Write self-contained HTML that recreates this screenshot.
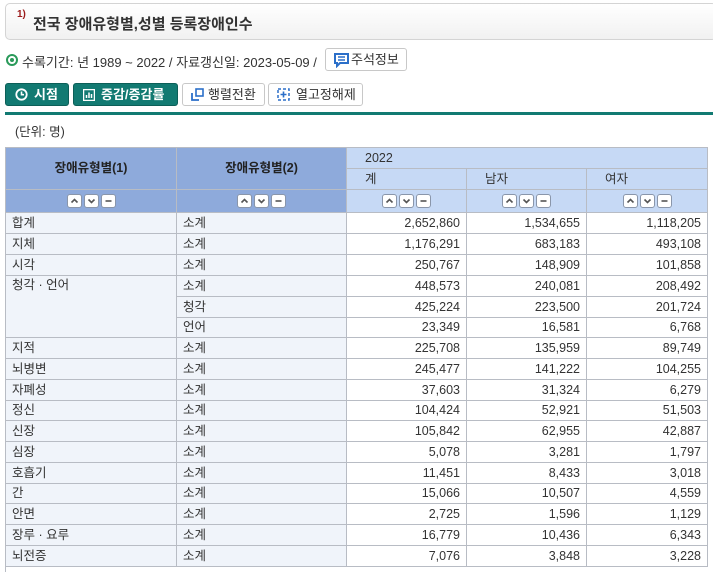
<!DOCTYPE html>
<html><head><meta charset="utf-8"><style>
*{margin:0;padding:0;box-sizing:border-box}
body{width:713px;height:572px;overflow:hidden;background:#fff;font-family:"Liberation Sans","Noto Sans CJK KR",sans-serif;color:#222;position:relative;font-size:13px}
.a{position:absolute}
.title{left:5px;top:3px;width:712px;height:37px;border:1px solid #d4d4d4;border-radius:5px;background:linear-gradient(#fff,#f1f1f1);}
.title span{position:absolute;left:27px;top:9px;font-size:15px;font-weight:bold;color:#333}
.title sup{position:absolute;left:11px;top:5px;font-size:10px;font-weight:bold;color:#9b1b1b}
.btn{position:absolute;top:83px;height:23px;border-radius:3px;font-size:13px;line-height:21px;white-space:nowrap}
.g{background:#127a72;color:#fff;font-weight:bold;border:1px solid #0c5f58}
.w{background:#fff;border:1px solid #c8c8c8;color:#333}
table{position:absolute;left:5px;top:147px;border-collapse:collapse;table-layout:fixed;font-size:12.5px}
td{border:1px solid #b8bcc4;height:21px;padding:0 6px;color:#333;line-height:19px;overflow:hidden;white-space:nowrap}
tr.s td{height:20px}
td.l{background:#f0f4fa}
td.n{text-align:right}
.h1{background:#8eaadb;font-weight:bold;text-align:center;color:#222}
.h2{background:#c6d9f5}
.ic{display:inline-block;width:15px;height:14px;border:1px solid #8a96aa;border-radius:3px;background:#fff;margin:0 1px;vertical-align:middle}
.ic svg{display:block}
</style></head><body>
<div class="a title"><sup>1)</sup><span>전국 장애유형별,성별 등록장애인수</span></div>
<div class="a" style="left:6px;top:54px;width:12px;height:12px;border-radius:50%;border:2px solid #2a9a5a"><div style="width:4px;height:4px;margin:2px;border-radius:50%;background:#2a9a5a"></div></div>
<div class="a" style="left:22px;top:52px;font-size:13px;color:#333">수록기간: 년 1989 ~ 2022 / 자료갱신일: 2023-05-09 /</div>
<div class="a" style="left:325px;top:48px;width:82px;height:23px;border:1px solid #c8c8c8;border-radius:3px;background:#fff;font-size:13px;line-height:21px;color:#333"><svg style="position:absolute;left:8px;top:4px" width="15" height="15" viewBox="0 0 15 15"><path d="M1 1h13v9H6l-3 3v-3H1z" fill="none" stroke="#2b6fc9" stroke-width="2"/><path d="M4 4h7M4 7h7" stroke="#2b6fc9" stroke-width="1.5"/></svg><span style="position:absolute;left:25px">주석정보</span></div>
<div class="btn g" style="left:5px;width:64px"><svg style="position:absolute;left:9px;top:4px" width="13" height="13" viewBox="0 0 13 13"><circle cx="6.5" cy="6.5" r="5.2" fill="none" stroke="#fff" stroke-width="1.8"/><path d="M6.5 3.5v3.2h2.5" fill="none" stroke="#fff" stroke-width="1.6"/></svg><span style="position:absolute;left:28px">시점</span></div>
<div class="btn g" style="left:73px;width:105px"><svg style="position:absolute;left:9px;top:5px" width="12" height="12" viewBox="0 0 12 12"><rect x="0.5" y="0.5" width="11" height="11" fill="none" stroke="#fff" stroke-width="1.5"/><path d="M3.5 9V6M6 9V3.5M8.5 9V5" stroke="#fff" stroke-width="1.5"/></svg><span style="position:absolute;left:27px">증감/증감률</span></div>
<div class="btn w" style="left:182px;width:83px"><svg style="position:absolute;left:8px;top:4px" width="13" height="13" viewBox="0 0 13 13"><rect x="5" y="1" width="7" height="7" fill="none" stroke="#2b6fc9" stroke-width="1.6"/><path d="M1 5v7h7" fill="none" stroke="#2b6fc9" stroke-width="1.8"/></svg><span style="position:absolute;left:25px">행렬전환</span></div>
<div class="btn w" style="left:268px;width:95px"><svg style="position:absolute;left:8px;top:4px" width="13" height="13" viewBox="0 0 13 13"><rect x="1" y="1" width="11" height="11" fill="none" stroke="#2b6fc9" stroke-width="1.5" stroke-dasharray="3 2"/><path d="M6.5 3.5v6M3.5 6.5h6" stroke="#2b6fc9" stroke-width="1.6"/></svg><span style="position:absolute;left:27px">열고정해제</span></div>
<div class="a" style="left:5px;top:112px;width:708px;height:3px;background:#127a72"></div>
<div class="a" style="left:15px;top:121px;font-size:12.5px;color:#333">(단위: 명)</div>
<div class="a" style="left:5px;top:560px;width:1px;height:12px;background:#b8bcc4"></div>
<table>
<colgroup><col style="width:171px"><col style="width:170px"><col style="width:120px"><col style="width:120px"><col style="width:121px"></colgroup>
<tr><td class="h1" rowspan="2" style="height:41px">장애유형별(1)</td><td class="h1" rowspan="2">장애유형별(2)</td><td class="h2" colspan="3" style="padding-left:18px">2022</td></tr>
<tr><td class="h2" style="padding-left:18px">계</td><td class="h2" style="padding-left:18px">남자</td><td class="h2" style="padding-left:18px">여자</td></tr>
<tr style="height:23px">
<td class="h1"><span class="ic"><svg width="13" height="12"><path d="M3.5 7.5l3-3 3 3" fill="none" stroke="#555" stroke-width="1.6"/></svg></span><span class="ic"><svg width="13" height="12"><path d="M3.5 4.5l3 3 3-3" fill="none" stroke="#555" stroke-width="1.6"/></svg></span><span class="ic"><svg width="13" height="12"><path d="M3.5 6h6" stroke="#555" stroke-width="1.6"/></svg></span></td>
<td class="h1"><span class="ic"><svg width="13" height="12"><path d="M3.5 7.5l3-3 3 3" fill="none" stroke="#555" stroke-width="1.6"/></svg></span><span class="ic"><svg width="13" height="12"><path d="M3.5 4.5l3 3 3-3" fill="none" stroke="#555" stroke-width="1.6"/></svg></span><span class="ic"><svg width="13" height="12"><path d="M3.5 6h6" stroke="#555" stroke-width="1.6"/></svg></span></td>
<td class="h2" style="text-align:center"><span class="ic"><svg width="13" height="12"><path d="M3.5 7.5l3-3 3 3" fill="none" stroke="#555" stroke-width="1.6"/></svg></span><span class="ic"><svg width="13" height="12"><path d="M3.5 4.5l3 3 3-3" fill="none" stroke="#555" stroke-width="1.6"/></svg></span><span class="ic"><svg width="13" height="12"><path d="M3.5 6h6" stroke="#555" stroke-width="1.6"/></svg></span></td>
<td class="h2" style="text-align:center"><span class="ic"><svg width="13" height="12"><path d="M3.5 7.5l3-3 3 3" fill="none" stroke="#555" stroke-width="1.6"/></svg></span><span class="ic"><svg width="13" height="12"><path d="M3.5 4.5l3 3 3-3" fill="none" stroke="#555" stroke-width="1.6"/></svg></span><span class="ic"><svg width="13" height="12"><path d="M3.5 6h6" stroke="#555" stroke-width="1.6"/></svg></span></td>
<td class="h2" style="text-align:center"><span class="ic"><svg width="13" height="12"><path d="M3.5 7.5l3-3 3 3" fill="none" stroke="#555" stroke-width="1.6"/></svg></span><span class="ic"><svg width="13" height="12"><path d="M3.5 4.5l3 3 3-3" fill="none" stroke="#555" stroke-width="1.6"/></svg></span><span class="ic"><svg width="13" height="12"><path d="M3.5 6h6" stroke="#555" stroke-width="1.6"/></svg></span></td>
</tr>
<tr><td class="l">합계</td><td class="l">소계</td><td class="n">2,652,860</td><td class="n">1,534,655</td><td class="n">1,118,205</td></tr>
<tr><td class="l">지체</td><td class="l">소계</td><td class="n">1,176,291</td><td class="n">683,183</td><td class="n">493,108</td></tr>
<tr><td class="l">시각</td><td class="l">소계</td><td class="n">250,767</td><td class="n">148,909</td><td class="n">101,858</td></tr>
<tr><td class="l" rowspan="3" style="vertical-align:top">청각 · 언어</td><td class="l">소계</td><td class="n">448,573</td><td class="n">240,081</td><td class="n">208,492</td></tr>
<tr><td class="l">청각</td><td class="n">425,224</td><td class="n">223,500</td><td class="n">201,724</td></tr>
<tr class="s"><td class="l">언어</td><td class="n">23,349</td><td class="n">16,581</td><td class="n">6,768</td></tr>
<tr><td class="l">지적</td><td class="l">소계</td><td class="n">225,708</td><td class="n">135,959</td><td class="n">89,749</td></tr>
<tr><td class="l">뇌병변</td><td class="l">소계</td><td class="n">245,477</td><td class="n">141,222</td><td class="n">104,255</td></tr>
<tr><td class="l">자폐성</td><td class="l">소계</td><td class="n">37,603</td><td class="n">31,324</td><td class="n">6,279</td></tr>
<tr class="s"><td class="l">정신</td><td class="l">소계</td><td class="n">104,424</td><td class="n">52,921</td><td class="n">51,503</td></tr>
<tr><td class="l">신장</td><td class="l">소계</td><td class="n">105,842</td><td class="n">62,955</td><td class="n">42,887</td></tr>
<tr><td class="l">심장</td><td class="l">소계</td><td class="n">5,078</td><td class="n">3,281</td><td class="n">1,797</td></tr>
<tr><td class="l">호흡기</td><td class="l">소계</td><td class="n">11,451</td><td class="n">8,433</td><td class="n">3,018</td></tr>
<tr class="s"><td class="l">간</td><td class="l">소계</td><td class="n">15,066</td><td class="n">10,507</td><td class="n">4,559</td></tr>
<tr><td class="l">안면</td><td class="l">소계</td><td class="n">2,725</td><td class="n">1,596</td><td class="n">1,129</td></tr>
<tr><td class="l">장루 · 요루</td><td class="l">소계</td><td class="n">16,779</td><td class="n">10,436</td><td class="n">6,343</td></tr>
<tr><td class="l">뇌전증</td><td class="l">소계</td><td class="n">7,076</td><td class="n">3,848</td><td class="n">3,228</td></tr>
</table>
</body></html>
